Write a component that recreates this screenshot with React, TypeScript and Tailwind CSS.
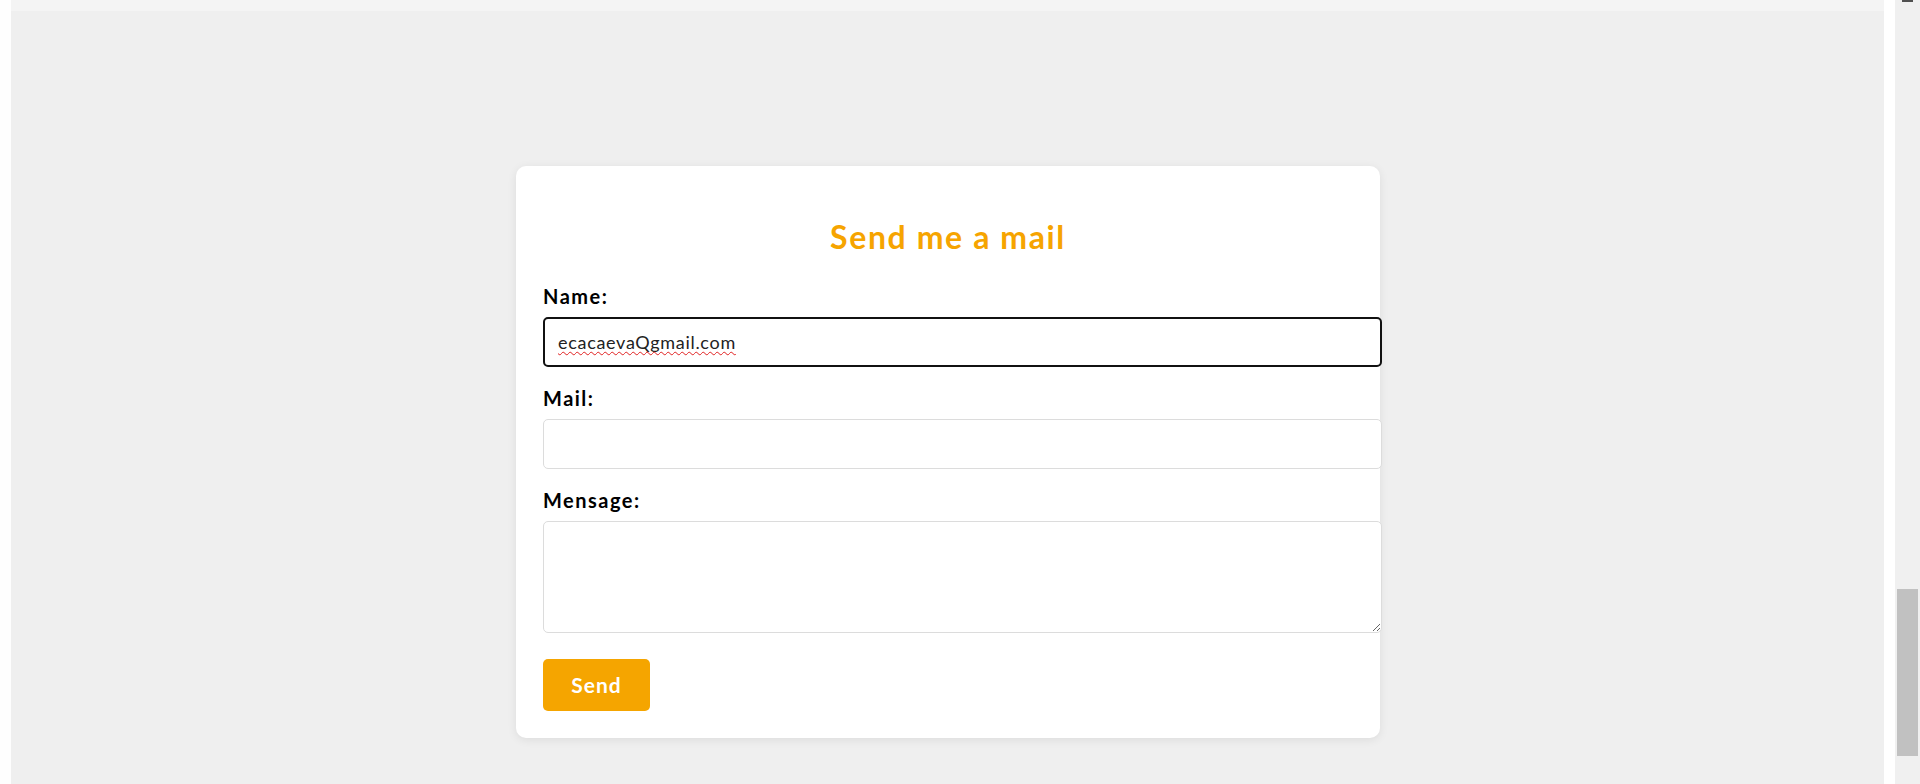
import React from 'react';

const font = { fontFamily: 'Lato, "Open Sans", sans-serif' };

export default function App() {
  return (
    <div className="flex h-[784px] w-full overflow-hidden bg-white" style={font}>
      <div className="w-[11px] bg-[#fefefe]" />

      <div className="flex flex-1 flex-col bg-[#efefef]">
        <div className="h-[11px] bg-[#f4f4f4]" />

        <main className="flex flex-1 justify-center pt-[155px]">
          <form
            className="ml-[1px] h-[572px] w-[864px] rounded-[10px] bg-white px-[27px] pt-[52px] pb-[27px] shadow-[0_2px_10px_rgba(0,0,0,0.08)]"
            onSubmit={(e) => e.preventDefault()}
          >
            <h2 className="text-center text-[32px] font-bold leading-[38px] tracking-[1.6px] text-[#f6a400]">
              Send me a mail
            </h2>

            <label className="mt-[28px] block text-[20px] font-bold leading-[24px] tracking-[1.5px] text-black">Name:</label>
            <div className="relative mt-[9px] w-[839px]">
              <input
                type="text"
                defaultValue="ecacaevaQgmail.com"
                className="block h-[50px] w-[839px] rounded-[5px] border-2 border-[#111] bg-white px-[13px] text-[18px] tracking-[0.7px] text-[#222] outline-none"
              />
              {/* spellcheck squiggle */}
              <span className="pointer-events-none absolute top-[12px] left-[15px] text-[18px] leading-[24px] tracking-[0.7px] text-transparent underline decoration-[#e02020] decoration-wavy decoration-1 underline-offset-[3px]">
                ecacaevaQgmail.com
              </span>
            </div>

            <label className="mt-[19px] block text-[20px] font-bold leading-[24px] tracking-[1.5px] text-black">Mail:</label>
            <input
              type="email"
              className="mt-[9px] block h-[50px] w-[839px] rounded-[5px] border border-[#dcdcdc] bg-white px-[12px] text-[18px] outline-none"
            />

            <label className="mt-[19px] block text-[20px] font-bold leading-[24px] tracking-[1.5px] text-black">Mensage:</label>
            <textarea className="mt-[9px] block h-[112px] w-[839px] resize rounded-[5px] border border-[#dcdcdc] bg-white px-[12px] py-[10px] text-[18px] outline-none" />

            <button
              type="submit"
              className="mt-[26px] h-[52px] w-[107px] rounded-[5px] bg-[#f5a500] text-[21px] font-bold tracking-[1px] text-white"
            >
              Send
            </button>
          </form>
        </main>
      </div>

      <div className="w-[11px] bg-white" />

      {/* scrollbar */}
      <div className="flex w-[25px] flex-col bg-[#f0f0f0]">
        <div className="mx-[7px] h-[2px] bg-[#505050]" />
        <div className="mt-[587px] ml-[2px] mr-[2px] h-[167px] bg-[#c1c1c1]" />
      </div>
    </div>
  );
}
